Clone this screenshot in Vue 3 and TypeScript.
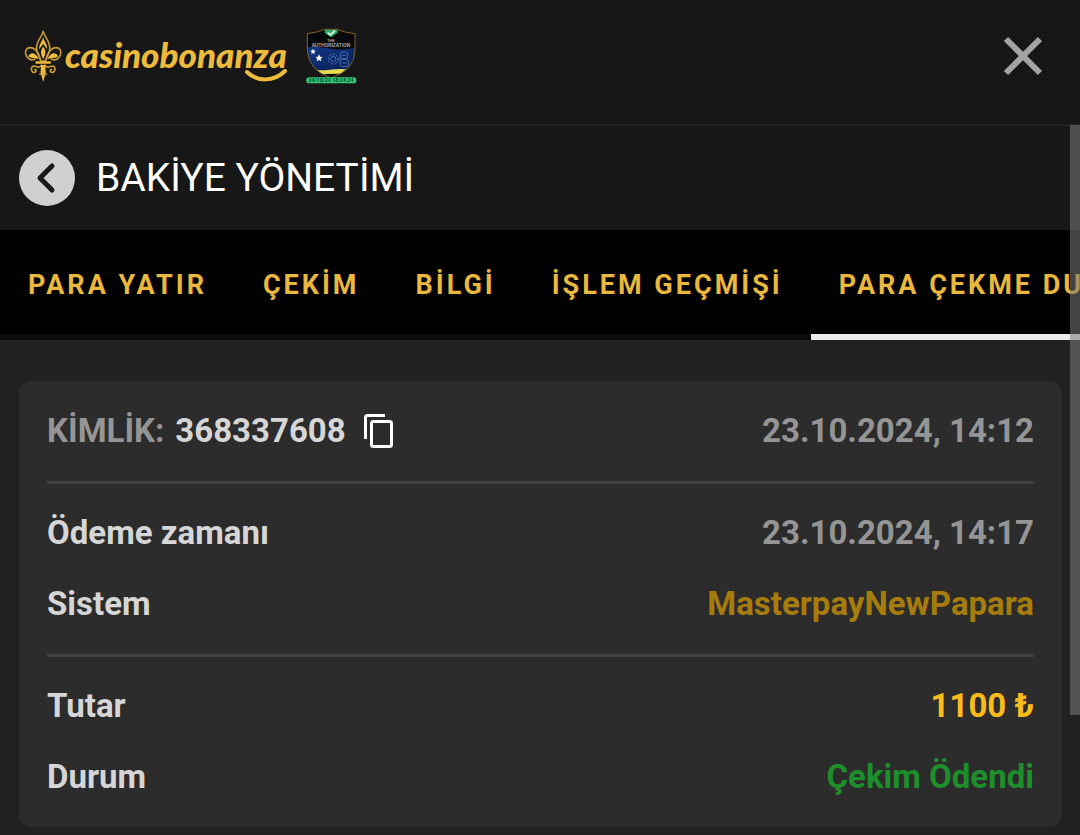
<script setup lang="ts">
import { ref } from 'vue'

interface Detail {
  label: string
  value: string
  tone: 'muted' | 'bronze' | 'gold' | 'green'
}

const tabs: string[] = ['PARA YATIR', 'ÇEKİM', 'BİLGİ', 'İŞLEM GEÇMİŞİ', 'PARA ÇEKME DURUMU']
const activeTab = ref<string>('PARA ÇEKME DURUMU')

const transactionId = '368337608'
const createdAt = '23.10.2024, 14:12'

const groups: Detail[][] = [
  [
    { label: 'Ödeme zamanı', value: '23.10.2024, 14:17', tone: 'muted' },
    { label: 'Sistem', value: 'MasterpayNewPapara', tone: 'bronze' },
  ],
  [
    { label: 'Tutar', value: '1100 ₺', tone: 'gold' },
    { label: 'Durum', value: 'Çekim Ödendi', tone: 'green' },
  ],
]

function copyId(): void {
  navigator.clipboard?.writeText(transactionId)
}
</script>

<template>
  <div class="page">
    <header class="topbar">
      <a class="brand" href="#" aria-label="casinobonanza">
        <svg class="lily" viewBox="42 30 116 160" aria-hidden="true">
          <g fill="none" stroke="#c49a38" stroke-width="5" stroke-linecap="round" stroke-linejoin="round">
            <path d="M99 34C96 50 79 62 79 84C79 100 88 112 93 124H105C110 112 119 100 119 84C119 62 102 50 99 34Z" />
            <path d="M91 122C88 102 76 83 60 83C49 83 44 92 46 102C49 116 62 124 74 118" />
            <path d="M107 122C110 102 122 83 138 83C149 83 154 92 152 102C149 116 136 124 124 118" />
            <path d="M94 136C86 151 75 134 67 140C60 146 64 158 72 158C79 158 79 150 74 149" />
            <path d="M104 136C112 151 123 134 131 140C138 146 134 158 126 158C119 158 119 150 124 149" />
          </g>
          <g fill="#eebb3d">
            <path d="M99 50C97 64 86 72 87 88L99 72L111 88C112 72 101 64 99 50Z" />
            <path d="M99 80C94 88 90 96 94 106L99 118L104 106C108 96 104 88 99 80Z" />
            <path d="M54 109C60 96 76 95 86 118C75 113 66 118 54 109ZM144 109C138 96 122 95 112 118C123 113 132 118 144 109Z" />
            <path d="M76 124H122V132H76ZM93 136H105L107 158L99 187L91 158Z" />
          </g>
          <path d="M87 163H111" stroke="#d6a93c" stroke-width="4" />
        </svg>
        <span class="wordmark">
          casinobonanza
          <svg class="smile" viewBox="0 0 42 13" aria-hidden="true">
            <path d="M2 3C12 13 29 13 40 2" fill="none" stroke="#eebb3d" stroke-width="4" stroke-linecap="round" />
          </svg>
        </span>
      </a>

      <svg class="seal" viewBox="38 24 153 168" role="img" aria-label="Lisans">
        <defs>
          <clipPath id="shield">
            <path d="M42 41Q75 37 94 28H133Q150 37 185 41V92Q184 150 113 174Q45 150 42 92Z" />
          </clipPath>
          <linearGradient id="field" x1="0" y1="0" x2="1" y2="1">
            <stop offset="0" stop-color="#12388c" />
            <stop offset="1" stop-color="#061b4c" />
          </linearGradient>
        </defs>
        <g clip-path="url(#shield)">
          <path d="M38 24H191V192H38Z" fill="#07080c" />
          <path d="M38 83Q65 76 105 85T191 82V155H38Z" fill="url(#field)" />
          <path d="M38 148Q78 153 110 149T191 150V163Q140 158 38 165Z" fill="#e8dc52" />
          <path d="M94 24H133V38L113 52L94 38Z" fill="#24ad62" />
          <path d="M103 38L111 45L125 32" fill="none" stroke="#e9fff2" stroke-width="5" />
        </g>
        <path d="M42 41Q75 37 94 28H133Q150 37 185 41V92Q184 150 113 174Q45 150 42 92Z" fill="none" stroke="#806329" stroke-width="3" />
        <g fill="#ffffff">
          <path d="M59 86L61 91L67 92L63 96L64 102L59 99L54 102L55 96L51 92L57 91Z" />
          <path d="M77 102L80 110L88 111L82 116L84 124L77 120L70 124L72 116L66 111L74 110Z" />
        </g>
        <g fill="none" stroke="#4b6cae" stroke-width="3">
          <circle cx="120" cy="117" r="15" stroke-dasharray="8 3" />
          <circle cx="120" cy="117" r="8" />
          <rect x="141" y="96" width="22" height="20" rx="7" />
          <rect x="140" y="118" width="26" height="22" rx="8" />
          <path d="M146 106H158M147 129H160M132 117H142" />
        </g>
        <g fill="#b9bec8" font-family="Roboto, sans-serif" font-weight="500" text-anchor="middle">
          <text x="113" y="65" font-size="13">THE</text>
          <text x="113" y="81" font-size="15">AUTHORIZATION</text>
        </g>
        <rect x="39" y="172" width="150" height="18" rx="8" fill="#35c878" />
        <text x="113" y="187" fill="#09472b" font-family="Roboto, sans-serif" font-size="16" font-weight="700" text-anchor="middle">24/10/24 18:24:24</text>
      </svg>

      <button class="close" type="button" aria-label="Kapat">
        <svg viewBox="0 0 40 40" aria-hidden="true">
          <path d="M3 3L37 37M37 3L3 37" stroke="#a3a3a3" stroke-width="6" />
        </svg>
      </button>
    </header>

    <div class="titlebar">
      <button class="back" type="button" aria-label="Geri">
        <svg viewBox="0 0 56 56" aria-hidden="true">
          <path d="M33 16L21 28L33 40" fill="none" stroke="#191919" stroke-width="5" stroke-linecap="round" stroke-linejoin="round" />
        </svg>
      </button>
      <h1>BAKİYE YÖNETİMİ</h1>
    </div>

    <nav class="tabs">
      <button
        v-for="tab in tabs"
        :key="tab"
        type="button"
        class="tab"
        :class="{ active: tab === activeTab }"
        @click="activeTab = tab"
      >
        {{ tab }}
      </button>
    </nav>

    <main class="content">
      <article class="card">
        <div class="group">
          <div class="row">
            <div class="ident">
              <span class="muted">KİMLİK:</span>
              <span>{{ transactionId }}</span>
              <button class="copy" type="button" aria-label="Kopyala" @click="copyId">
                <svg viewBox="0 0 29 34" aria-hidden="true">
                  <path d="M1.500 25V3.500Q1.500 1.500 3.500 1.500H21" fill="none" stroke="#fff" stroke-width="3" />
                  <rect x="7.500" y="7.500" width="20" height="25" rx="2" fill="none" stroke="#fff" stroke-width="3" />
                </svg>
              </button>
            </div>
            <time class="muted">{{ createdAt }}</time>
          </div>
        </div>
        <dl v-for="(group, index) in groups" :key="index" class="group">
          <div v-for="item in group" :key="item.label" class="row">
            <dt>{{ item.label }}</dt>
            <dd :class="item.tone">{{ item.value }}</dd>
          </div>
        </dl>
      </article>
    </main>

    <div class="scroll-thumb" aria-hidden="true"></div>
  </div>
</template>

<style>
body {
  background: #212121;
}
</style>

<style scoped>
.page {
  position: relative;
  overflow: hidden;
  background: #212121;
  color: #d6d6d6;
  font-family: Roboto, "Liberation Sans", sans-serif;
}

button {
  margin: 0;
  padding: 0;
  border: 0;
  background: none;
  color: inherit;
  font: inherit;
  cursor: pointer;
}

svg {
  display: block;
}

.topbar {
  display: flex;
  align-items: center;
  height: 112px;
  padding: 0 37px 12px 24px;
  border-bottom: 2px solid #222222;
  background: #171717;
}

.brand {
  display: flex;
  align-items: center;
  gap: 2px;
  color: #eebb3d;
  text-decoration: none;
}

.lily {
  width: 39px;
  height: 53px;
}

.wordmark {
  position: relative;
  padding-bottom: 4px;
  font: italic 900 35px/48px Lato, sans-serif;
}

.smile {
  position: absolute;
  right: 0;
  bottom: 0;
  width: 42px;
  height: 13px;
}

.seal {
  width: 51px;
  height: 56px;
  margin-left: 19px;
}

.close {
  margin-left: auto;
}

.close svg {
  width: 40px;
  height: 40px;
}

.titlebar {
  display: flex;
  align-items: center;
  gap: 21px;
  height: 104px;
  padding: 0 19px;
  background: #171717;
}

.back {
  border-radius: 50%;
  background: #d0d0d0;
}

.back svg {
  width: 56px;
  height: 56px;
}

h1 {
  margin: 0;
  color: #ffffff;
  font-size: 39px;
  font-weight: 400;
  line-height: 48px;
}

.tabs {
  display: flex;
  overflow: hidden;
  background: #000000;
}

.tab {
  flex: none;
  height: 110px;
  padding: 6px 28px 0;
  border-bottom: 6px solid #0c0c0c;
  color: #e9b83c;
  font-size: 27px;
  font-weight: 700;
  letter-spacing: 3px;
  white-space: nowrap;
}

.tab.active {
  border-bottom-color: #eeeaea;
}

.content {
  padding: 41px 18px 9px 19px;
}

.card {
  border: 1px solid #2b2b2b;
  border-radius: 12px;
  background: #2c2c2c;
  padding: 0 27px;
  font-size: 33px;
  font-weight: 700;
  line-height: 40px;
}

.group {
  display: flex;
  flex-direction: column;
  gap: 31px;
  margin: 0;
  padding: 29px 0 30px;
}

.group:not(:last-child) {
  border-bottom: 3px solid #414141;
}

.group:last-child {
  padding-bottom: 29px;
}

.row {
  display: flex;
  justify-content: space-between;
}

.ident {
  display: flex;
  align-items: center;
  gap: 11px;
}

.copy {
  margin-left: 7px;
}

.copy svg {
  width: 29px;
  height: 34px;
}

dd {
  margin: 0;
}

.muted {
  color: #959595;
}

.bronze {
  color: #a67c0d;
}

.gold {
  color: #fbbc1b;
}

.green {
  color: #1f8f2c;
}

.scroll-thumb {
  position: absolute;
  top: 125px;
  right: 0;
  width: 10px;
  height: 590px;
  background: rgba(121, 121, 121, 0.56);
}
</style>
